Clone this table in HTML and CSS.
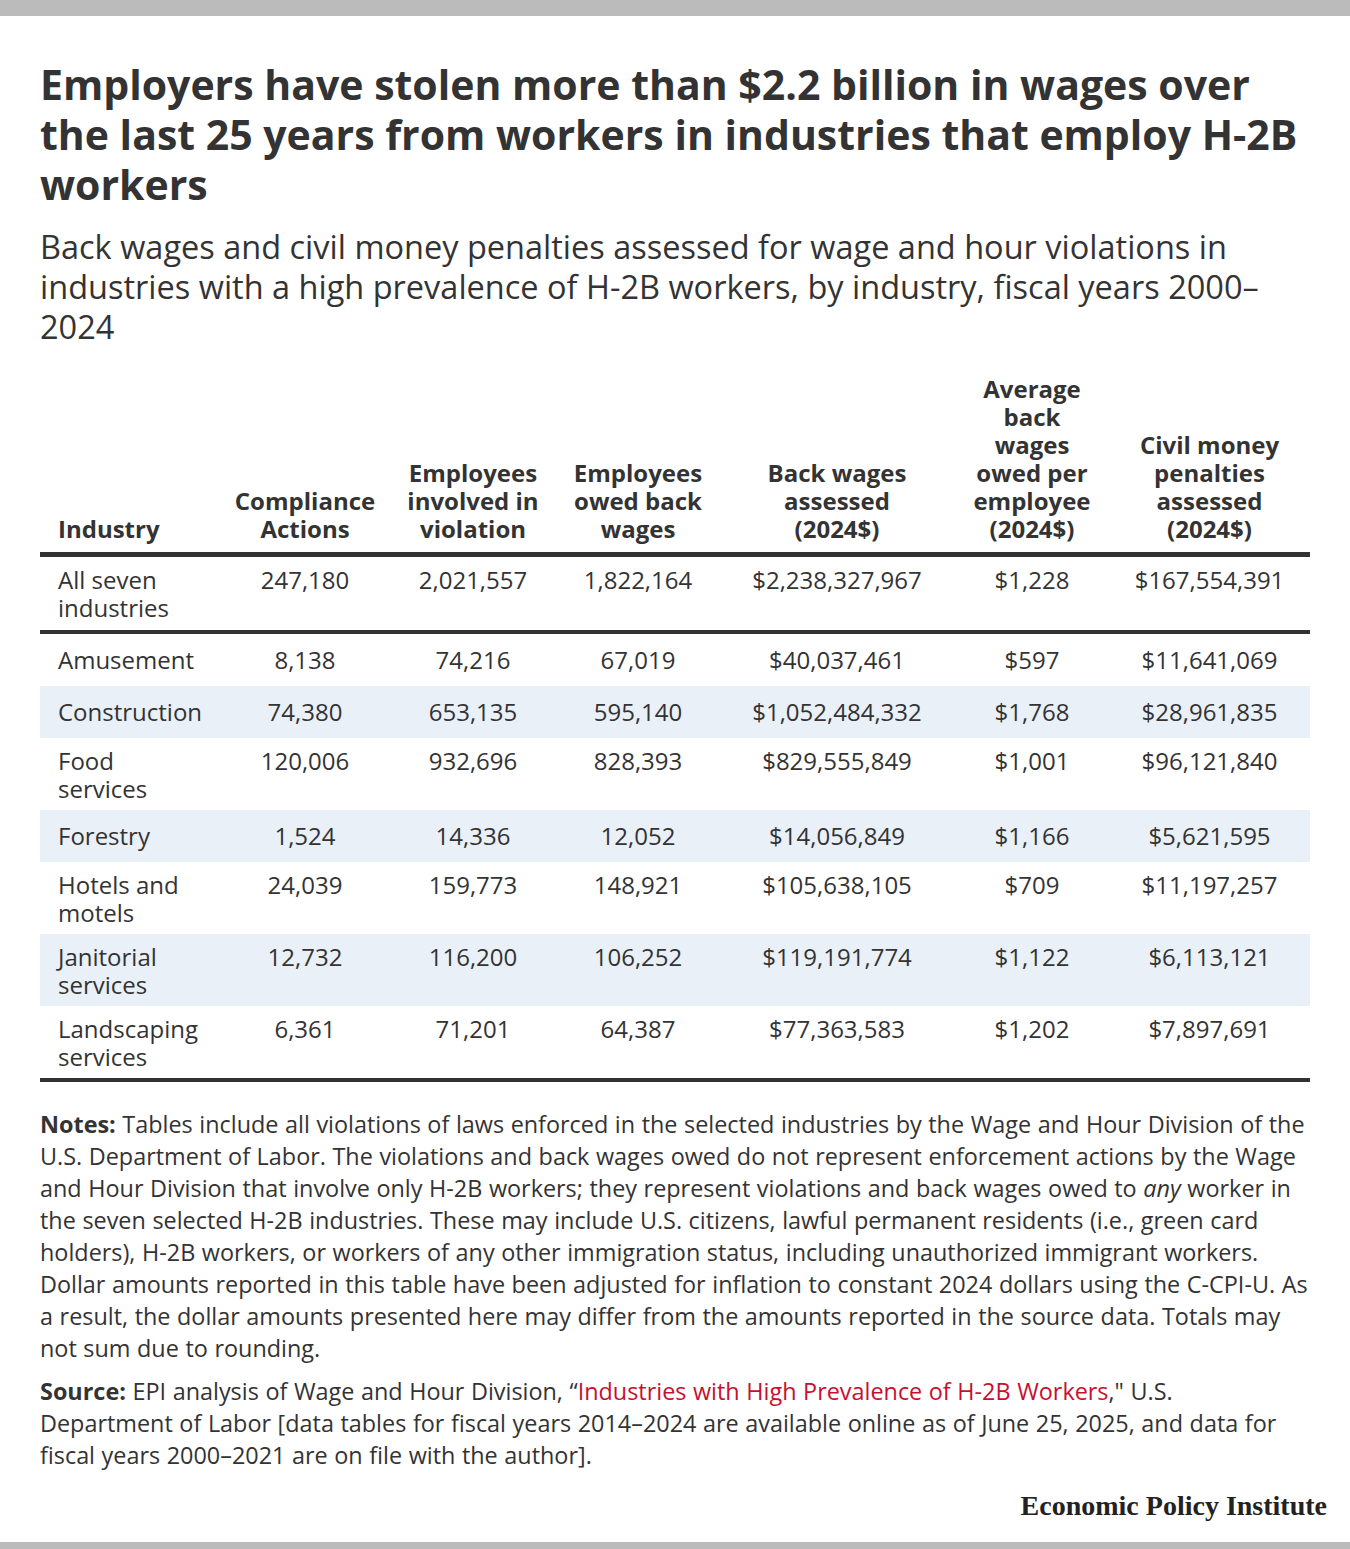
FILE: index.html
```html
<!DOCTYPE html>
<html lang="en">
<head>
<meta charset="utf-8">
<title>EPI table</title>
<link rel="stylesheet" href="styles.css">
</head>
<body>
<div class="bar"></div>
<main class="wrap">
  <h1 class="title">Employers have stolen more than $2.2 billion in wages over the last 25 years from workers in industries that employ H-2B workers</h1>
  <p class="subtitle">Back wages and civil money penalties assessed for wage and hour violations in industries with a high prevalence of H-2B workers, by industry, fiscal years 2000–2024</p>
  <table class="data">
    <colgroup>
      <col class="c1"><col class="c2"><col class="c3"><col class="c4"><col class="c5"><col class="c6"><col class="c7">
    </colgroup>
    <thead>
      <tr>
        <th class="left">Industry</th>
        <th>Compliance Actions</th>
        <th>Employees involved in violation</th>
        <th>Employees owed back wages</th>
        <th class="narrow">Back wages assessed (2024$)</th>
        <th>Average back wages owed per employee (2024$)</th>
        <th>Civil money penalties assessed (2024$)</th>
      </tr>
    </thead>
    <tbody class="total">
      <tr>
        <td class="left">All seven industries</td><td>247,180</td><td>2,021,557</td><td>1,822,164</td><td>$2,238,327,967</td><td>$1,228</td><td>$167,554,391</td>
      </tr>
    </tbody>
    <tbody class="rows">
      <tr class="single"><td class="left">Amusement</td><td>8,138</td><td>74,216</td><td>67,019</td><td>$40,037,461</td><td>$597</td><td>$11,641,069</td></tr>
      <tr class="single shade"><td class="left">Construction</td><td>74,380</td><td>653,135</td><td>595,140</td><td>$1,052,484,332</td><td>$1,768</td><td>$28,961,835</td></tr>
      <tr><td class="left">Food services</td><td>120,006</td><td>932,696</td><td>828,393</td><td>$829,555,849</td><td>$1,001</td><td>$96,121,840</td></tr>
      <tr class="single shade"><td class="left">Forestry</td><td>1,524</td><td>14,336</td><td>12,052</td><td>$14,056,849</td><td>$1,166</td><td>$5,621,595</td></tr>
      <tr><td class="left">Hotels and motels</td><td>24,039</td><td>159,773</td><td>148,921</td><td>$105,638,105</td><td>$709</td><td>$11,197,257</td></tr>
      <tr class="shade"><td class="left">Janitorial services</td><td>12,732</td><td>116,200</td><td>106,252</td><td>$119,191,774</td><td>$1,122</td><td>$6,113,121</td></tr>
      <tr><td class="left">Landscaping services</td><td>6,361</td><td>71,201</td><td>64,387</td><td>$77,363,583</td><td>$1,202</td><td>$7,897,691</td></tr>
    </tbody>
  </table>
  <p class="note"><strong>Notes:</strong> Tables include all violations of laws enforced in the selected industries by the Wage and Hour Division of the U.S. Department of Labor. The violations and back wages owed do not represent enforcement actions by the Wage and Hour Division that involve only H-2B workers; they represent violations and back wages owed to <em>any</em> worker in the seven selected H-2B industries. These may include U.S. citizens, lawful permanent residents (i.e., green card holders), H-2B workers, or workers of any other immigration status, including unauthorized immigrant workers. Dollar amounts reported in this table have been adjusted for inflation to constant 2024 dollars using the C-CPI-U. As a result, the dollar amounts presented here may differ from the amounts reported in the source data. Totals may not sum due to rounding.</p>
  <p class="note source"><strong>Source:</strong> EPI analysis of Wage and Hour Division, “<a class="link" href="#">Industries with High Prevalence of H-2B Workers</a>," U.S. Department of Labor [data tables for fiscal years 2014–2024 are available online as of June 25, 2025, and data for fiscal years 2000–2021 are on file with the author].</p>
  <div class="brand">Economic Policy Institute</div>
</main>
<div class="bar bottom"></div>
</body>
</html>
```
FILE: styles.css
```css
html, body {
  margin: 0;
  padding: 0;
  background: #fff;
}
body {
  font-family: "Open Sans", "Noto Sans", sans-serif;
  color: #333;
  width: 1350px;
  height: 1549px;
  display: flex;
  flex-direction: column;
}
.bar {
  height: 16px;
  background: #bbbbbb;
  flex: none;
}
.bar.bottom {
  height: 7px;
  margin-top: auto;
}
.wrap {
  padding: 0 40px;
  display: flex;
  flex-direction: column;
}
.title {
  margin: 43px 0 0;
  font-size: 41px;
  line-height: 50px;
  font-weight: 700;
  color: #333;
}
.subtitle {
  margin: 18px 0 0;
  font-size: 32.5px;
  line-height: 40px;
  font-weight: 400;
  color: #333;
}
.data {
  margin-top: 19px;
  border-collapse: collapse;
  width: 1270px;
  table-layout: fixed;
  font-size: 24px;
  line-height: 28px;
}
.c1 { width: 181px; }
.c2 { width: 168px; }
.c3 { width: 168px; }
.c4 { width: 162px; }
.c5 { width: 236px; }
.c6 { width: 154px; }
.c7 { width: 201px; }
.data th {
  font-weight: 700;
  text-align: center;
  vertical-align: bottom;
  padding: 9px 12px 9px;
  border-bottom: 5px solid #333;
}
.data th.narrow {
  padding-left: 30px;
  padding-right: 30px;
}
.data th.left, .data td.left {
  text-align: left;
  padding-left: 18px;
  padding-right: 18px;
}
.data td {
  text-align: center;
  vertical-align: top;
  padding: 9px 8px 7px;
}
.total td {
  padding-bottom: 8px;
  border-bottom: 4px solid #333;
}
.rows tr.single td {
  padding-top: 12px;
  padding-bottom: 12px;
}
.rows tr.shade td {
  background: #eaf0f8;
}
.rows tr:last-child td {
  border-bottom: 4px solid #333;
}
.note {
  margin: 26px 0 0;
  font-size: 23.4px;
  line-height: 32px;
  word-spacing: 0.5px;
}
.note.source {
  margin-top: 11px;
}
.note strong {
  font-weight: 700;
}
.link {
  color: #c8102e;
  text-decoration: none;
}
.brand {
  align-self: flex-end;
  margin: 20px -17px 0 0;
  font-family: "Liberation Serif", "DejaVu Serif", serif;
  font-weight: 700;
  font-size: 28px;
  line-height: 30px;
  color: #222;
}
```
